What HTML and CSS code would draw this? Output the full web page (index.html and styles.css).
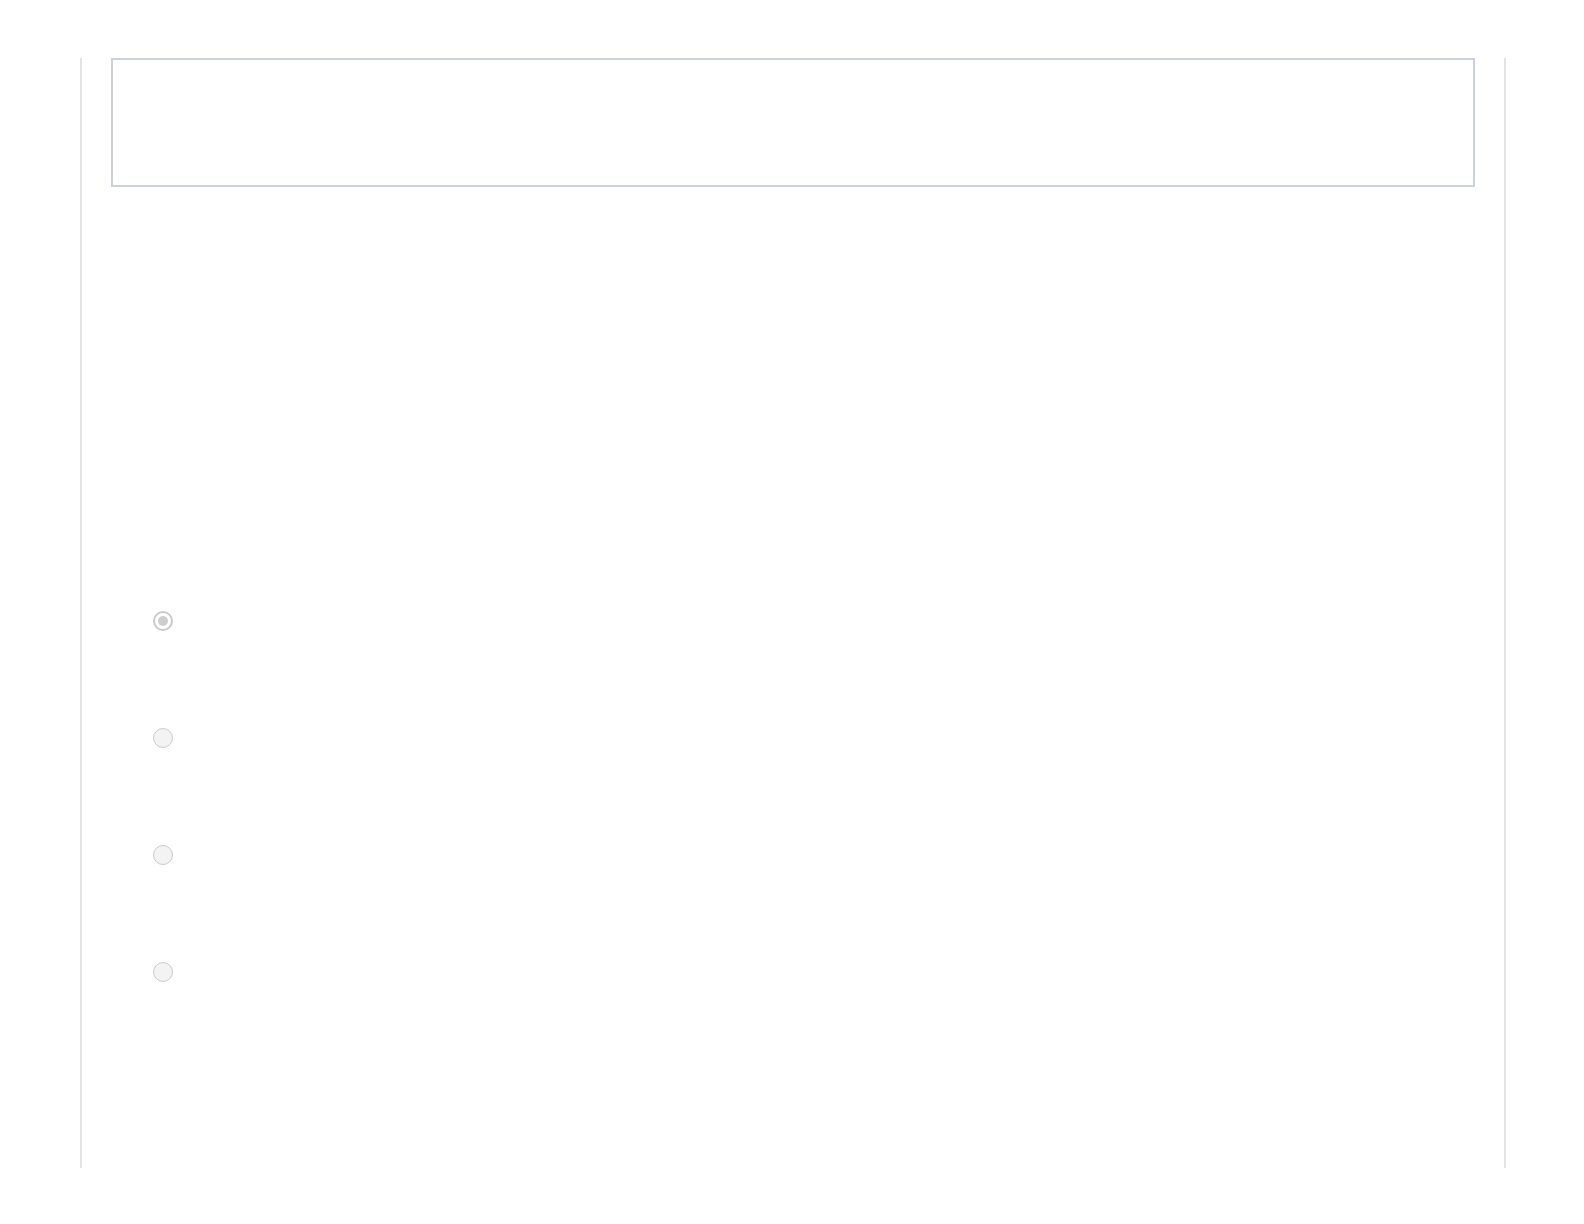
FILE: index.html
```html
<!DOCTYPE html>
<html lang="en">
<head>
<meta charset="utf-8">
<title>Form</title>
<link rel="stylesheet" href="styles.css">
</head>
<body>
<main class="page">
  <div class="panel"></div>
  <ul class="options">
    <li class="option"><input class="radio" type="radio" name="opt" checked disabled></li>
    <li class="option"><input class="radio" type="radio" name="opt" disabled></li>
    <li class="option"><input class="radio" type="radio" name="opt" disabled></li>
    <li class="option"><input class="radio" type="radio" name="opt" disabled></li>
  </ul>
</main>
</body>
</html>
```
FILE: styles.css
```css
html, body {
  margin: 0;
  padding: 0;
  background: #ffffff;
  font-family: "Liberation Sans", Arial, sans-serif;
}

.page {
  box-sizing: border-box;
  width: 1426px;
  height: 1110px;
  margin: 58px 0 0 80px;
  padding: 0 29px;
  border-left: 2px solid #e3e3e3;
  border-right: 2px solid #e3e3e3;
}

.panel {
  box-sizing: border-box;
  height: 129px;
  border: 2px solid #cbd2dc;
  background: #ffffff;
}

.options {
  list-style: none;
  margin: 424px 0 0 42px;
  padding: 0;
  display: flex;
  flex-direction: column;
  gap: 96.9px;
}

.option {
  display: flex;
  height: 20px;
  align-items: center;
}

.radio {
  appearance: none;
  -webkit-appearance: none;
  box-sizing: border-box;
  width: 20px;
  height: 20px;
  margin: 0;
  border-radius: 50%;
  border: 1.6px solid #cbcbcb;
  background: #f3f3f3;
  display: grid;
  place-items: center;
}

.radio:checked {
  border: 2px solid #cacaca;
  background: #ffffff;
}

.radio:checked::before {
  content: "";
  width: 10px;
  height: 10px;
  border-radius: 50%;
  background: #cdcdcd;
}
```
